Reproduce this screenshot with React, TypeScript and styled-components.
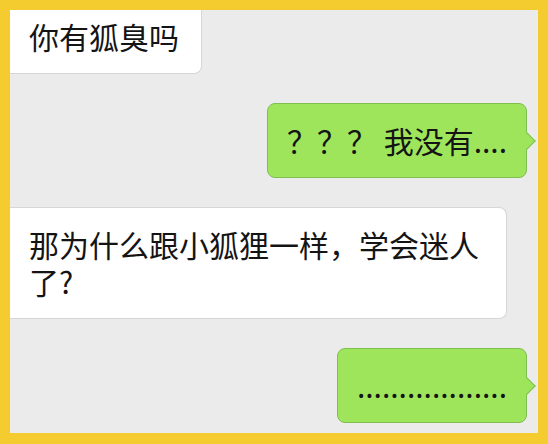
import React from 'react'
import styled, { createGlobalStyle } from 'styled-components'

const GlobalStyle = createGlobalStyle`
  html, body {
    margin: 0;
    padding: 0;
    background: #ebebeb;
  }
`

const Frame = styled.div`
  width: 548px;
  height: 444px;
  box-sizing: border-box;
  border: 10px solid #f5cc2f;
  border-bottom-width: 11px;
  background-color: #ebebeb;
  overflow: hidden;
  font-family: 'Noto Sans CJK SC', 'Noto Sans', sans-serif;
`

const MessageList = styled.div`
  display: flex;
  flex-direction: column;
  gap: 29px;
  margin-top: -11px;
`

const Row = styled.div<{ $mine?: boolean }>`
  display: flex;
  justify-content: ${props => (props.$mine ? 'flex-end' : 'flex-start')};
  padding-right: ${props => (props.$mine ? '11px' : '0')};
`

const Bubble = styled.div<{ $mine?: boolean }>`
  position: relative;
  box-sizing: border-box;
  max-width: 497px;
  padding: 18px ${props => (props.$mine ? '19px' : '22px')} 18px 19px;
  border-radius: 8px;
  border: 1px solid ${props => (props.$mine ? '#7fbf4f' : '#d6d6d6')};
  border-left-width: ${props => (props.$mine ? '1px' : '0')};
  border-top-left-radius: ${props => (props.$mine ? '8px' : '0')};
  border-bottom-left-radius: ${props => (props.$mine ? '8px' : '0')};
  background-color: ${props => (props.$mine ? '#9ee55c' : '#ffffff')};
  color: #141414;
  font-size: 30px;
  line-height: 37px;

  ${props =>
    props.$mine &&
    `
    &::after {
      content: '';
      position: absolute;
      top: 50%;
      right: -7px;
      width: 12px;
      height: 12px;
      background-color: #9ee55c;
      border-top: 1px solid #7fbf4f;
      border-right: 1px solid #7fbf4f;
      transform: translateY(-50%) rotate(45deg);
    }
  `}
`

const messages = [
  { mine: false, text: '你有狐臭吗' },
  { mine: true, text: '？？？ 我没有....' },
  { mine: false, text: '那为什么跟小狐狸一样，学会迷人了?' },
  { mine: true, text: '..................' },
]

export default function App() {
  return (
    <>
      <GlobalStyle />
      <Frame>
        <MessageList>
          {messages.map((m, i) => (
            <Row key={i} $mine={m.mine}>
              <Bubble $mine={m.mine}>{m.text}</Bubble>
            </Row>
          ))}
        </MessageList>
      </Frame>
    </>
  )
}
